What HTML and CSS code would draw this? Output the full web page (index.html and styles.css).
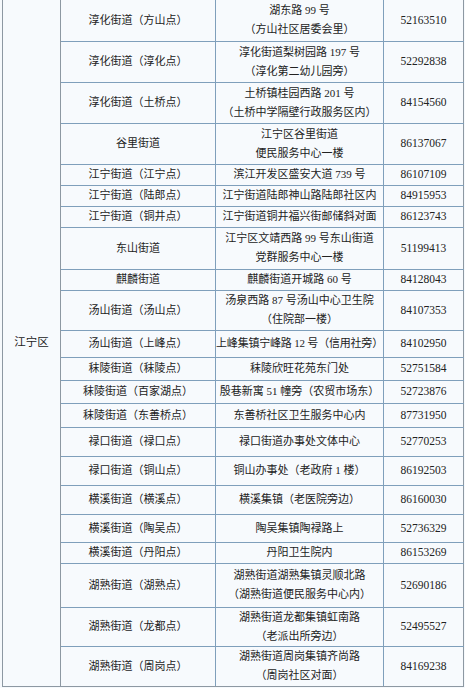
FILE: index.html
```html
<!DOCTYPE html>
<html lang="zh-CN">
<head>
<meta charset="utf-8">
<title>江宁区服务点</title>
<link rel="stylesheet" href="styles.css">
</head>
<body>
<div class="page">
<table class="grid">
<colgroup>
<col class="c-dist"><col class="c-name"><col class="c-addr"><col class="c-tel">
</colgroup>
<tbody>
<tr class="h41"><td class="dist" rowspan="22">江宁区</td><td>淳化街道（方山点）</td><td>湖东路 99 号<br>（方山社区居委会里）</td><td class="tel">52163510</td></tr>
<tr class="h41"><td>淳化街道（淳化点）</td><td>淳化街道梨树园路 197 号<br>（淳化第二幼儿园旁）</td><td class="tel">52292838</td></tr>
<tr class="h41"><td>淳化街道（土桥点）</td><td>土桥镇桂园西路 201 号<br>（土桥中学隔壁行政服务区内）</td><td class="tel">84154560</td></tr>
<tr class="h41"><td>谷里街道</td><td>江宁区谷里街道<br>便民服务中心一楼</td><td class="tel">86137067</td></tr>
<tr class="h21"><td>江宁街道（江宁点）</td><td>滨江开发区盛安大道 739 号</td><td class="tel">86107109</td></tr>
<tr class="h21"><td>江宁街道（陆郎点）</td><td>江宁街道陆郎神山路陆郎社区内</td><td class="tel">84915953</td></tr>
<tr class="h21"><td>江宁街道（铜井点）</td><td>江宁街道铜井福兴街邮储斜对面</td><td class="tel">86123743</td></tr>
<tr class="h42"><td>东山街道</td><td>江宁区文靖西路 99 号东山街道<br>党群服务中心一楼</td><td class="tel">51199413</td></tr>
<tr class="h21"><td>麒麟街道</td><td>麒麟街道开城路 60 号</td><td class="tel">84128043</td></tr>
<tr class="h40"><td>汤山街道（汤山点）</td><td>汤泉西路 87 号汤山中心卫生院<br>（住院部一楼）</td><td class="tel">84107353</td></tr>
<tr class="h27"><td>汤山街道（上峰点）</td><td class="tight">上峰集镇宁峰路 12 号（信用社旁）</td><td class="tel">84102950</td></tr>
<tr class="h23"><td>秣陵街道（秣陵点）</td><td>秣陵欣旺花苑东门处</td><td class="tel">52751584</td></tr>
<tr class="h23"><td>秣陵街道（百家湖点）</td><td>殷巷新寓 51 幢旁（农贸市场东）</td><td class="tel">52723876</td></tr>
<tr class="h24"><td>秣陵街道（东善桥点）</td><td>东善桥社区卫生服务中心内</td><td class="tel">87731950</td></tr>
<tr class="h29"><td>禄口街道（禄口点）</td><td>禄口街道办事处文体中心</td><td class="tel">52770253</td></tr>
<tr class="h29"><td>禄口街道（铜山点）</td><td>铜山办事处（老政府 1 楼）</td><td class="tel">86192503</td></tr>
<tr class="h29"><td>横溪街道（横溪点）</td><td>横溪集镇（老医院旁边）</td><td class="tel">86160030</td></tr>
<tr class="h28"><td>横溪街道（陶吴点）</td><td>陶吴集镇陶禄路上</td><td class="tel">52736329</td></tr>
<tr class="h21"><td>横溪街道（丹阳点）</td><td>丹阳卫生院内</td><td class="tel">86153269</td></tr>
<tr class="h44"><td>湖熟街道（湖熟点）</td><td>湖熟街道湖熟集镇灵顺北路<br>（湖熟街道便民服务中心内）</td><td class="tel">52690186</td></tr>
<tr class="h38"><td>湖熟街道（龙都点）</td><td>湖熟街道龙都集镇虹南路<br>（老派出所旁边）</td><td class="tel">52495527</td></tr>
<tr class="h40"><td>湖熟街道（周岗点）</td><td>湖熟街道周岗集镇齐尚路<br>（周岗社区对面）</td><td class="tel">84169238</td></tr>
</tbody>
</table>
</div>
</body>
</html>
```
FILE: styles.css
```css
html, body {
  margin: 0;
  padding: 0;
  background: #f6f9fc;
}

.page {
  padding: 0 0 0 2px;
  width: 461px;
}

.grid {
  width: 461px;
  border-collapse: collapse;
  table-layout: fixed;
  font-family: "Liberation Serif", "Noto Sans CJK SC", serif;
  font-size: 11px;
  color: #222222;
  background: #f7fafd;
}

.c-dist { width: 58px; }
.c-name { width: 155px; }
.c-addr { width: 168px; }
.c-tel { width: 80px; }

.grid td {
  border: 1px solid #7f9fbb;
  border-top: none;
  padding: 0;
  text-align: center;
  vertical-align: middle;
  line-height: 19px;
  white-space: nowrap;
  overflow: visible;
}

.grid td.dist {
  border-left: 1.5px solid #8d98a2;
  border-right: 1.5px solid #8d98a2;
  border-bottom: 1.5px solid #8d98a2;
  font-size: 11.5px;
}

.grid td.tel {
  font-size: 11.5px;
  border-right: 1.5px solid #8d98a2;
}

.grid tr:last-child td {
  border-bottom: 1.5px solid #8d98a2;
}

.grid td.tight {
  letter-spacing: -0.2px;
}

.h21 { height: 21px; }
.h23 { height: 23px; }
.h24 { height: 24px; }
.h27 { height: 27px; }
.h28 { height: 28px; }
.h29 { height: 29px; }
.h38 { height: 38px; }
.h40 { height: 40px; }
.h41 { height: 41px; }
.h42 { height: 42px; }
.h44 { height: 44px; }
```
